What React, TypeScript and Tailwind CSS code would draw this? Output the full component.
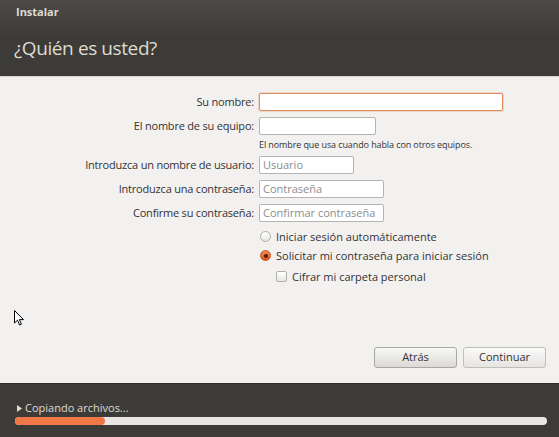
import React from 'react'

const font = { fontFamily: '"Open Sans", "Noto Sans", sans-serif' }

function Field({ label, width, placeholder, focused }: { label: string; width: string; placeholder?: string; focused?: boolean }) {
  return (
    <>
      <label className="text-right pr-[5px] text-[11px] text-[#333333] leading-[18px] tracking-[-0.2px]">{label}</label>
      <div className="flex">
        <div
          className={`${width} h-[18px] bg-white rounded-[2px] border px-[3px] text-[11px] leading-[16px] text-[#8c8c8c] ${focused ? 'border-[#e08a60] shadow-[0_0_0_1px_rgba(224,138,96,0.25)]' : 'border-[#b6b4b0]'}`}
        >
          {placeholder}
        </div>
      </div>
    </>
  )
}

export default function App() {
  return (
    <div className="w-[559px] h-[437px] flex flex-col bg-[#f2f1f0] overflow-hidden relative select-none" style={font}>
      {/* Header */}
      <div className="h-[77px] bg-gradient-to-b from-[#4b4a46] via-[#3c3b37] to-[#3c3b37] border-b border-[#d8d6d2] flex flex-col">
        <div className="pl-[16px] pt-[4px] text-[11px] font-bold text-[#dfdbd2] leading-[16px]">Instalar</div>
        <div className="pl-[14px] pt-[15px] text-[19px] text-[#dfdbd2] leading-[26px] tracking-[-0.4px]">¿Quién es usted?</div>
      </div>

      {/* Content */}
      <div className="flex-1 flex flex-col">
        <div className="grid grid-cols-[259px_1fr] items-center pt-[16px] gap-y-[6px]">
          <Field label="Su nombre:" width="w-[244px]" focused />
          <Field label="El nombre de su equipo:" width="w-[117px]" />
          <div />
          <div className="text-[9px] text-[#333333] leading-[12px] -mt-[2px] -mb-[1px] tracking-[-0.1px]">El nombre que usa cuando habla con otros equipos.</div>
          <Field label="Introduzca un nombre de usuario:" width="w-[95px]" placeholder="Usuario" />
          <Field label="Introduzca una contraseña:" width="w-[125px]" placeholder="Contraseña" />
          <Field label="Confirme su contraseña:" width="w-[125px]" placeholder="Confirmar contraseña" />
        </div>

        <div className="pl-[260px] pt-[8px] flex flex-col gap-[6px] text-[11px] text-[#333333] leading-[13px]">
          <div className="flex items-center gap-[5px]">
            <span className="w-[11px] h-[11px] rounded-full border border-[#b0aeaa] bg-gradient-to-b from-white to-[#e8e6e3]" />
            <span>Iniciar sesión automáticamente</span>
          </div>
          <div className="flex items-center gap-[5px]">
            <span className="w-[11px] h-[11px] rounded-full bg-gradient-to-b from-[#f08a5d] to-[#d9541f] border border-[#c4501f] flex items-center justify-center">
              <span className="w-[4px] h-[4px] rounded-full bg-[#5a1a04]" />
            </span>
            <span>Solicitar mi contraseña para iniciar sesión</span>
          </div>
          <div className="flex items-center gap-[5px] pl-[16px] mt-[2px]">
            <span className="w-[11px] h-[11px] rounded-[2px] border border-[#b0aeaa] bg-gradient-to-b from-white to-[#e8e6e3]" />
            <span>Cifrar mi carpeta personal</span>
          </div>
        </div>

        <div className="flex-1" />

        <div className="flex justify-end gap-[6px] pr-[13px] pb-[15px]">
          <button className="w-[83px] h-[21px] rounded-[3px] border border-[#a9a7a3] bg-gradient-to-b from-[#f7f7f6] to-[#dcdad6] text-[11px] text-[#333333]">Atrás</button>
          <button className="w-[83px] h-[21px] rounded-[3px] border border-[#c0beba] bg-gradient-to-b from-[#fafaf9] to-[#e6e4e1] text-[11px] text-[#333333]">Continuar</button>
        </div>
      </div>

      {/* Footer */}
      <div className="h-[54px] bg-[#3c3b37] border-t border-[#2e2d2a] flex flex-col px-[15px] pt-[17px]">
        <div className="flex items-center gap-[3px] text-[11px] text-[#dfdbd2] leading-[14px] pl-[2px]">
          <svg width="5" height="7" viewBox="0 0 5 7"><path d="M0 0 L5 3.5 L0 7 Z" fill="#dfdbd2" /></svg>
          <span>Copiando archivos...</span>
        </div>
        <div className="mt-[2px] w-[532px] h-[8px] rounded-full bg-[#e9e7e3] overflow-hidden">
          <div className="h-full rounded-full bg-[#f07746]" style={{ width: '90px' }} />
        </div>
      </div>

      {/* Mouse cursor */}
      <svg className="absolute left-[14px] top-[310px]" width="11" height="16" viewBox="0 0 11 16">
        <path d="M0.5 0.5 L0.5 13 L3.5 10.2 L5.6 15 L7.4 14.2 L5.4 9.6 L9.5 9.6 Z" fill="white" stroke="black" strokeWidth="1" strokeLinejoin="round" />
      </svg>
    </div>
  )
}
